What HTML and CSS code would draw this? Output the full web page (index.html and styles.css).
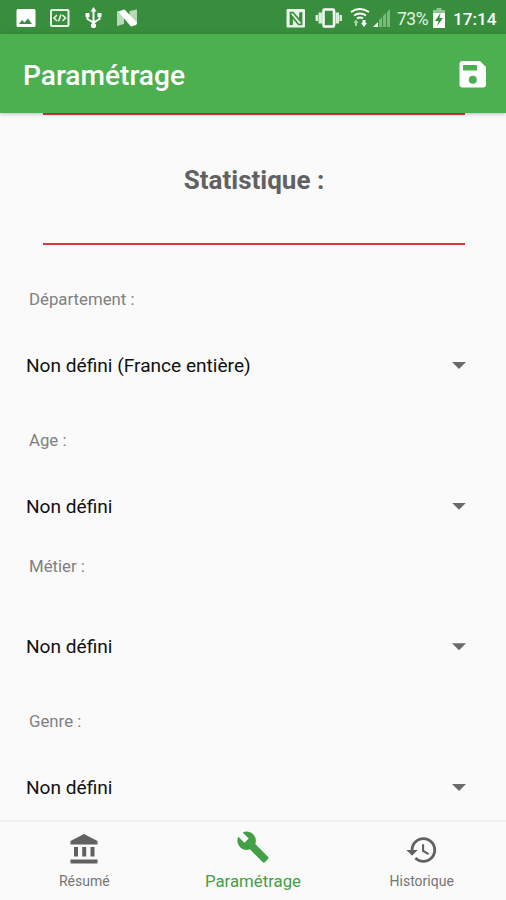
FILE: index.html
```html
<!DOCTYPE html>
<html lang="fr">
<head>
<meta charset="utf-8">
<title>Paramétrage</title>
<link rel="stylesheet" href="styles.css">
</head>
<body>
<div class="screen">
  <div class="status">
    <svg class="status-left" width="150" height="34" viewBox="0 0 150 34">
      <path fill="#fff" fill-rule="evenodd" d="M18 9h16q1.500 0 1.500 1.500v15q0 1.500-1.500 1.500H18q-1.500 0-1.500-1.500v-15Q16.500 9 18 9zM19 24h13l-4-5.500-3.500 4-2.500-2.500z"/>
      <rect x="51" y="10" width="17.500" height="16" rx="1" fill="none" stroke="#eaf5ea" stroke-width="2"/>
      <path fill="none" stroke="#eaf5ea" stroke-width="1.600" d="M57 15l-3 3 3 3M62.500 15l3 3-3 3M61 14.500l-2.500 7"/>
      <path fill="none" stroke="#fff" stroke-width="2" d="M93.500 10v15M87.500 15v4l6 3.500 6-3.500v-5"/>
      <path fill="#fff" d="M90.500 11.500l3-4.500 3 4.500zM85.500 13h4v4h-4zM97.500 13h4v4h-4z"/>
      <circle cx="93.500" cy="25.500" r="2.600" fill="#fff"/>
      <path fill="#b8dab9" d="M117 11l7 3v10l-7 2zM129.500 11l7.500-1.500v15l-7.500-3z"/>
      <path fill="#fff" d="M118 11.500l6.500-2L137 22.500l-1 2.500-5 1.500z"/>
    </svg>
    <div class="status-right">
      <svg width="108" height="34" viewBox="284 0 108 34">
        <rect x="286.500" y="9" width="18.500" height="18.500" rx="1" fill="#e9f5e9"/>
        <path fill="none" stroke="#388e3c" stroke-width="1.700" d="M290.500 25V12.500h2.500l7 8V12.500M301.500 12v12.500h-3l-6.500-8V25"/>
        <rect x="323.500" y="9.500" width="10.500" height="17" rx="1" fill="none" stroke="#fff" stroke-width="2.500"/>
        <path fill="none" stroke="#d9edda" stroke-width="3.500" d="M320.300 12.500v11M337.300 12.500v11"/>
        <path fill="none" stroke="#d9edda" stroke-width="2.500" d="M316.800 15v6M340.700 15v6"/>
        <g fill="none" stroke="#fff" stroke-width="1.800"><path d="M351 12q8.500-6 18 0M354 15.500q6-4 12 0M357 18.500q3-2 6 0"/></g>
        <path fill="#fff" d="M361 23h1.500v-3h3v3h1.500l-3 4z"/>
        <path fill="#a9d1ab" d="M353.500 23l2.500-3.500 2.500 3.500h-1.500v3h-2v-3z"/>
        <path fill="#fff" d="M373 27l5-5v5z"/>
        <path fill="#7cb97f" d="M379 20l3-3v10h-3zM383 16l3-3v14h-3zM387 12l3-3v18h-3z"/>
      </svg>
      <span class="percent">73%</span>
      <svg class="battery" width="14" height="22" viewBox="0 0 14 22">
        <path fill="#8fc592" d="M4.500 1h5v2H13v4H1V3h3.500z"/><path fill="#fff" d="M1 6h12v15H1z"/>
        <path fill="#388e3c" d="M8.500 6L3 14h3.500L5 19l6-8H7.500z"/>
      </svg>
      <span class="clock">17:14</span>
    </div>
  </div>

  <header class="appbar">
    <h1>Paramétrage</h1>
    <svg width="34" height="34" viewBox="0 0 34 34">
      <path fill="#fff" fill-rule="evenodd" d="M6.500 3H24l6 6v17.500q0 3-3 3H6.500q-3 0-3-3V6q0-3 3-3zM7 7v5.500h14V7z"/>
      <circle cx="16.800" cy="21.800" r="4" fill="#4caf50"/>
    </svg>
  </header>

  <main>
    <section class="heading"><h2>Statistique :</h2></section>
    <div class="field"><div class="label">Département :</div><div class="select"><span>Non défini (France entière)</span><i class="caret"></i></div></div>
    <div class="field"><div class="label">Age :</div><div class="select"><span>Non défini</span><i class="caret"></i></div></div>
    <div class="field job"><div class="label">Métier :</div><div class="select"><span>Non défini</span><i class="caret"></i></div></div>
    <div class="field"><div class="label">Genre :</div><div class="select"><span>Non défini</span><i class="caret"></i></div></div>
  </main>

  <nav>
    <div class="tab">
      <svg width="34" height="34" viewBox="0 0 34 34"><path fill="#616161" d="M17 1l13.500 7v3.500h-27V8zM7 14h4v9.500H7zM15.200 14h4v9.500h-4zM23.500 14h4v9.500h-4zM3.500 26.500h27v4h-27z"/></svg>
      <span>Résumé</span>
    </div>
    <div class="tab active">
      <svg width="34" height="34" viewBox="0 0 24 24"><path fill="#43a047" d="M22.700 19l-9.100-9.100c.9-2.300.4-5-1.500-6.900-2-2-5-2.400-7.400-1.300L9 6 6 9 1.600 4.700C.4 7.100.9 10.100 2.900 12.100c1.900 1.900 4.600 2.400 6.900 1.500l9.100 9.100c.4.4 1 .4 1.400 0l2.300-2.300c.5-.4.5-1.100.1-1.400z"/></svg>
      <span>Paramétrage</span>
    </div>
    <div class="tab">
      <svg width="34" height="34" viewBox="0 0 24 24"><path fill="#616161" d="M13 3c-4.970 0-9 4.030-9 9H1l3.890 3.890.07.14L9 12H6c0-3.870 3.130-7 7-7s7 3.130 7 7-3.130 7-7 7c-1.930 0-3.680-.79-4.940-2.060l-1.420 1.420C8.270 19.990 10.510 21 13 21c4.970 0 9-4.030 9-9s-4.030-9-9-9zm-1 5v5l4.280 2.540.72-1.210-3.500-2.080V8H12z"/></svg>
      <span>Historique</span>
    </div>
  </nav>
</div>
</body>
</html>
```

FILE: styles.css
```css
* { box-sizing: border-box; }
body { margin: 0; font-family: Roboto, sans-serif; background: #fafafa; }
.screen { width: 506px; height: 900px; display: flex; flex-direction: column; overflow: hidden; }
svg { display: block; flex: none; }

.status { height: 34px; flex: none; background: #388e3c; display: flex; justify-content: space-between; color: #fff; }
.status-right { display: flex; align-items: center; width: 222px; }
.percent { font-size: 17.5px; line-height: 34px; width: 32px; margin-left: 5px; margin-top: 3px; color: #e4f2e5; letter-spacing: -.5px; white-space: nowrap; }
.battery { margin: 2px 0 0 3px; }
.clock { font-size: 17.2px; font-weight: 500; line-height: 34px; margin: 3px 0 0 7px; white-space: nowrap; }

.appbar { height: 79px; flex: none; background: #4caf50; display: flex; align-items: center; justify-content: space-between; padding: 2px 16px 0 23px; z-index: 1; box-shadow: 0 1px 4px rgba(0, 0, 0, .25); }
h1 { margin: 2px 0 0; color: #fff; font-size: 28.1px; line-height: 36px; font-weight: 500; }

main { flex: 1; }
.heading { height: 132px; margin: 0 41px 0 43px; border: solid #d93a36; border-width: 2px 0; display: flex; justify-content: center; padding-top: 48px; }
h2 { margin: 0; color: #616161; font-size: 26px; line-height: 34px; font-weight: 700; }
.field { height: 140.6px; padding: 43px 40px 0 26px; display: flex; flex-direction: column; justify-content: space-between; }
.label { font-size: 16.8px; line-height: 22px; color: #808080; padding-left: 3px; }
.select { display: flex; justify-content: space-between; align-items: center; height: 24px; font-size: 19.1px; line-height: 24px; color: #111; margin-bottom: 8px; }
.select span { padding-top: 1px; }
.caret { width: 14px; height: 7px; background: #6a6a6a; clip-path: polygon(0 0, 100% 0, 50% 100%); }
.job { padding-top: 29px; }

nav { height: 80px; flex: none; background: #fafafa; border-top: 2px solid #f0f0f0; display: flex; }
.tab { flex: 1; display: flex; flex-direction: column; align-items: center; padding-top: 11px; font-size: 14px; color: #757575; }
.tab span { line-height: 20px; margin-top: 4px; }
.active { padding-top: 8px; color: #43a047; font-size: 16.8px; }
.active span { margin-top: 7px; }
```
